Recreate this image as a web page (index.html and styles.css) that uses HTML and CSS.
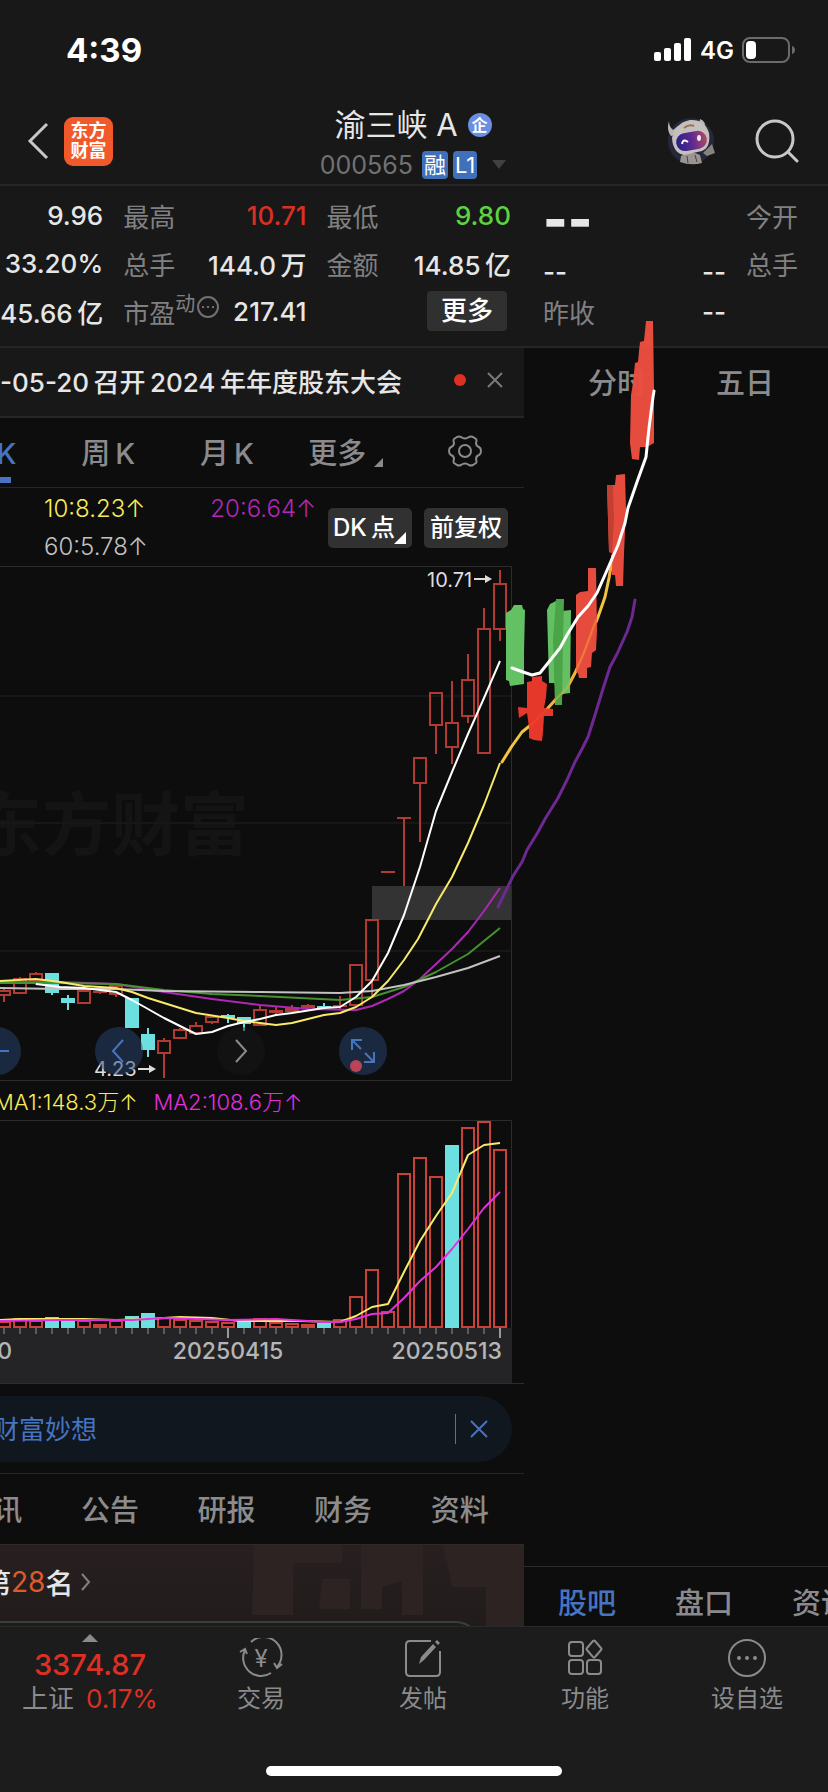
FILE: index.html
```
<!DOCTYPE html>
<html lang="zh-CN">

<head>
    <meta charset="UTF-8" />
    <meta name="viewport" content="width=device-width, initial-scale=1.0" />
    <title>渝三峡A 000565</title>
    <link rel="stylesheet" href="styles.css">
</head>

<body>
    <div class="status-bar">
        <span class="clock">4:39</span>
        <div class="status-icons">
            <svg width="38" height="24" viewBox="0 0 38 24" fill="#fff">
                <rect x="0" y="14" width="7" height="9" rx="2" />
                <rect x="10" y="10" width="7" height="13" rx="2" />
                <rect x="20" y="5" width="7" height="18" rx="2" />
                <rect x="30" y="0" width="7" height="23" rx="2" />
            </svg>
            <span class="network">4G</span>
            <svg width="54" height="26" viewBox="0 0 54 26">
                <rect x="1" y="1" width="46" height="24" rx="7" fill="none" stroke="#6b6b6b" stroke-width="2" />
                <rect x="4" y="4" width="10" height="18" rx="4" fill="#fff" />
                <path d="M50 9C54 10 54 16 50 17Z" fill="#6b6b6b" />
            </svg>
        </div>
    </div>

    <header class="header">
        <div class="header-left">
            <button class="icon-btn" aria-label="返回">
                <svg width="22" height="38" viewBox="0 0 22 38" fill="none" stroke="#c8c8c8" stroke-width="3">
                    <path d="M20 2L3 19L20 36" />
                </svg>
            </button>
            <div class="logo">东方<br>财富</div>
        </div>
        <div class="stock">
            <h1 class="stock-name">渝三峡 A <span class="badge-qi">企</span></h1>
            <div class="stock-code">
                <span>000565</span>
                <span class="tag">融</span>
                <span class="tag">L1</span>
                <svg class="code-arrow" width="14" height="9" viewBox="0 0 14 9"><path d="M0 0H14L7 9Z" fill="#404040" /></svg>
            </div>
        </div>
        <div class="header-right">
            <button class="icon-btn" aria-label="智能助手">
                <svg width="50" height="50" viewBox="0 0 50 50">
                    <defs>
                        <linearGradient id="visor" x1="0" x2="1">
                            <stop offset="0" stop-color="#28208a" />
                            <stop offset="0.5" stop-color="#5a2a90" />
                            <stop offset="1" stop-color="#b04868" />
                        </linearGradient>
                    </defs>
                    <circle cx="25" cy="25" r="23" fill="#24283a" />
                    <path d="M15 40Q25 34 34 39L36 47Q25 50 14 46Z" fill="#9c9490" />
                    <path d="M37 37L46 28L49 37L41 40Z" fill="#88827f" />
                    <path d="M3 5Q3 11 7 14L12 10L13 18L5 20Q0 14 3 5ZM34 3Q41 5 38 14L33 9Z" fill="#b9b5b3" />
                    <path d="M6 22Q9 7 24 4Q39 3 43 17Q45 31 36 35L18 39Q7 37 6 22Z" fill="#c5c0be" />
                    <rect x="10" y="16" width="31" height="18" rx="9" fill="url(#visor)" transform="rotate(-10 25 25)" />
                    <path d="M16 28Q17 22 22 26" fill="none" stroke="#fff" stroke-width="2" />
                    <ellipse cx="33" cy="22" rx="2" ry="3" fill="#f5e8ee" />
                    <path d="M18 12Q23 8 28 10" fill="none" stroke="#9a7450" stroke-width="2" />
                    <path d="M21 40L22 47M29 39L31 46" stroke="#47403e" stroke-width="1" />
                </svg>
            </button>
            <button class="icon-btn" aria-label="搜索">
                <svg width="44" height="46" viewBox="0 0 44 46" fill="none" stroke="#c8c8c8" stroke-width="3">
                    <circle cx="20" cy="21" r="18" />
                    <path d="M33 34L42 43" stroke-linecap="round" />
                </svg>
            </button>
        </div>
    </header>

    <section class="quotes">
        <div class="quote-main">
            <div class="cell cell-end"><b>9.96</b></div>
            <div class="cell"><span>最高</span><b class="red">10.71</b></div>
            <div class="cell"><span>最低</span><b class="green">9.80</b></div>
            <div class="cell cell-end"><b>33.20%</b></div>
            <div class="cell"><span>总手</span><b>144.0&thinsp;万</b></div>
            <div class="cell"><span>金额</span><b>14.85&thinsp;亿</b></div>
            <div class="cell cell-end"><b>45.66&thinsp;亿</b></div>
            <div class="cell">
                <span class="pe">市盈<sup>动</sup><svg width="22" height="22" viewBox="0 0 22 22" fill="none" stroke="#717173" stroke-width="2">
                        <circle cx="11" cy="11" r="10" />
                        <path d="M5 11h2M10 11h2M15 11h2" />
                    </svg></span>
                <b>217.41</b>
            </div>
            <div class="cell cell-end"><button class="more-btn">更多</button></div>
        </div>
        <div class="quote-next">
            <b class="big-dash">--</b><span></span><span>今开</span>
            <b class="low">--</b><b class="low dash-right">--</b><span>总手</span>
            <span>昨收</span><b class="dash-right">--</b><span></span>
        </div>
    </section>

    <main class="main">
        <div class="col-left">
            <div class="notice">
                <span class="notice-text">-05-20&thinsp;召开&thinsp;2024&thinsp;年年度股东大会</span>
                <i class="dot"></i>
                <button class="icon-btn" aria-label="关闭公告">
                    <svg width="16" height="16" viewBox="0 0 16 16" stroke="#7a7a7a" stroke-width="2"><path d="M1 1L15 15M15 1L1 15" /></svg>
                </button>
            </div>

            <nav class="period-tabs">
                <a href="#" class="active">日&thinsp;K</a>
                <a href="#">周&thinsp;K</a>
                <a href="#">月&thinsp;K</a>
                <a href="#">更多<svg class="corner" width="9" height="9" viewBox="0 0 9 9"><path d="M9 0V9H0Z" fill="#8b8b8d" /></svg></a>
                <button class="icon-btn" aria-label="设置">
                    <svg width="34" height="32" viewBox="0 0 34 32" fill="none" stroke="#8b8b8d" stroke-width="2">
                        <path d="M9 2Q11 1 13 2Q17 5 21 2Q23 1 25 2L28 4Q29 5 28 8Q28 11 31 12Q33 13 33 16Q33 19 31 20Q28 21 28 24Q29 27 28 28L25 30Q23 31 21 30Q17 27 13 30Q11 31 9 30L6 28Q5 27 6 24Q6 21 3 20Q1 19 1 16Q1 13 3 12Q6 11 6 8Q5 5 6 4Z" />
                        <circle cx="17" cy="16" r="6" />
                    </svg>
                </button>
            </nav>

            <div class="ma-row">
                <div class="ma-list">
                    <span class="yellow">10:8.23↑</span>
                    <span class="purple">20:6.64↑</span>
                    <span class="grey">60:5.78↑</span>
                </div>
                <button class="chart-btn">DK&thinsp;点<svg class="btn-corner" width="12" height="12" viewBox="0 0 12 12"><path d="M12 0V12H0Z" fill="#fff" /></svg></button>
                <button class="chart-btn">前复权</button>
            </div>

            <div class="k-chart">
                <svg class="chart" viewBox="0 566 524 516">
                    <text x="249" y="850" text-anchor="end" class="watermark">东方财富</text>
                    <path d="M0 696H511M0 823H511M0 951H511" class="grid-line" />
                    <path d="M0 566.5H511.5V1080.5H0" class="frame" />
                    <rect x="372" y="886" width="139" height="34" fill="#333" />
                    <g id="candles"></g>
                    <g class="ma-lines">
                        <path stroke="#ad28b5" d="M0 982L60 982L116 984L140 988L164 992L212 999L260 1005L308 1009L356 1010L372 1006L388 999L404 991L420 979L436 964L452 949L468 932L484 911L500 888" />
                        <path stroke="#45922e" d="M0 983L60 983L116 984L132 986L164 990L212 994L260 996L340 1000L372 997L404 987L436 972L468 954L500 928" />
                        <path stroke="#c2c2c2" d="M0 988L60 989L116 989L164 991L260 992L340 993L372 991L404 985L436 977L468 968L500 956" />
                        <path stroke="#f8eb6b" d="M0 981L36 979L60 982L84 986L116 988L132 992L148 998L164 1003L196 1013L228 1018L244 1021L260 1023L276 1025L292 1023L324 1015L340 1013L356 1007L372 997L388 981L404 960L418 939L436 904L452 877L468 843L484 805L500 763" />
                        <path stroke="#fff" d="M36 984L60 987L84 988L116 992L132 1000L148 1009L164 1018L180 1026L196 1034L212 1032L228 1026L244 1022L260 1019L276 1015L292 1013L324 1008L340 1007L356 997L372 981L388 953L404 915L420 867L436 811L452 772L468 734L484 698L500 661" />
                    </g>
                    <text x="427" y="587" class="price-label">10.71</text>
                    <path d="M474 579H486" class="pointer" /><path d="M485 575L492 579L485 583Z" fill="#ddd" />
                    <text x="94" y="1076" class="price-label">4.23</text>
                    <path d="M138 1069H150" class="pointer" /><path d="M149 1065L156 1069L149 1073Z" fill="#ddd" />
                </svg>
                <div class="chart-tools">
                    <button class="round-btn" aria-label="缩小"><svg width="24" height="24" viewBox="0 0 24 24"><path d="M0 12H24" /></svg></button>
                    <button class="round-btn" aria-label="左移"><svg width="24" height="24" viewBox="0 0 24 24"><path d="M16 1L6 12L16 23" /></svg></button>
                    <button class="round-btn dark" aria-label="右移"><svg width="24" height="24" viewBox="0 0 24 24"><path d="M7 1L17 12L7 23" /></svg></button>
                    <button class="round-btn" aria-label="全屏">
                        <svg width="24" height="24" viewBox="0 0 24 24"><path d="M1 11V1H11M1 1L10 10M23 13V23H13M23 23L14 14" /></svg>
                        <i class="tool-dot"></i>
                    </button>
                </div>
            </div>

            <div class="vol-row">
                <span class="yellow">MA1:148.3万↑</span>
                <span class="pink">MA2:108.6万↑</span>
            </div>
            <svg class="chart" viewBox="0 1120 524 264">
                <path d="M0 1120.5H511.5V1328" class="frame" />
                <rect x="0" y="1328" width="512" height="55" fill="#242426" />
                <path d="M0 1383.5H524" class="frame" />
                <g id="volumes"></g>
                <g class="ma-lines">
                    <path stroke="#f8eb6b" d="M0 1320L20 1319L84 1319L116 1320L148 1319L180 1317L212 1318L240 1321L300 1321L340 1322L356 1316L372 1307L388 1304L404 1272L420 1241L436 1216L452 1193L468 1155L484 1145L500 1143" />
                    <path stroke="#e32fdf" d="M0 1321L60 1320L132 1320L164 1318L228 1320L276 1319L324 1322L340 1322L356 1319L372 1314L388 1313L404 1298L420 1281L436 1267L452 1249L468 1229L484 1208L500 1192" />
                </g>
                <text x="12" y="1359" text-anchor="end" class="date">20250320</text>
                <text x="228" y="1359" text-anchor="middle" class="date">20250415</text>
                <text x="502" y="1359" text-anchor="end" class="date">20250513</text>
            </svg>

            <div class="ai-wrap">
                <div class="ai-bar">
                    <a href="#" class="ai-text">东方财富妙想</a>
                    <button class="ai-close" aria-label="关闭">
                        <svg width="18" height="18" viewBox="0 0 18 18" stroke="#4674c0" stroke-width="2"><path d="M1 1L17 17M17 1L1 17" /></svg>
                    </button>
                </div>
            </div>

            <nav class="info-tabs">
                <a href="#">资讯</a>
                <a href="#">公告</a>
                <a href="#">研报</a>
                <a href="#">财务</a>
                <a href="#">资料</a>
            </nav>

            <div class="rank">
                <svg class="rank-bg" width="272" height="83" viewBox="0 0 272 83" fill="#2d2323">
                    <path d="M2 0H90V18H41V70H0ZM109 0H171V70H150V36L130 42V64H109ZM191 0H272V83H234V42H200ZM70 34H98V64H67Z" />
                </svg>
                <a href="#" class="rank-text">第<em>28</em>名
                    <svg width="10" height="18" viewBox="0 0 10 18" fill="none" stroke="#858080" stroke-width="2"><path d="M1 1L8 9L1 17" /></svg>
                </a>
                <div class="rank-card"></div>
            </div>
        </div>

        <div class="col-right">
            <nav class="next-tabs">
                <a href="#">分时</a>
                <a href="#">五日</a>
            </nav>
            <nav class="next-info">
                <a href="#" class="active">股吧</a>
                <a href="#">盘口</a>
                <a href="#">资讯</a>
            </nav>
        </div>
    </main>

    <footer class="bottom-bar">
        <a href="#" class="index">
            <svg width="16" height="8" viewBox="0 0 16 8"><path d="M0 8H16L8 0Z" fill="#8b8b8d" /></svg>
            <strong>3374.87</strong>
            <span class="index-name">上证 <em>0.17%</em></span>
        </a>
        <a href="#">
            <svg width="44" height="40" viewBox="0 0 44 40" fill="none" stroke="#8b8b8d" stroke-width="2">
                <path d="M12 4A18 18 0 0 1 37 30M32 35A18 18 0 0 1 6 12M1 14L6 11L8 16M43 26L38 30L35 25" />
                <text x="22" y="29" text-anchor="middle" class="yen">¥</text>
            </svg>
            <span>交易</span>
        </a>
        <a href="#">
            <svg width="44" height="40" viewBox="0 0 44 40" fill="none" stroke="#8b8b8d" stroke-width="2">
                <path d="M30 3H9Q5 3 5 7V34Q5 38 9 38H35Q39 38 39 34V13" />
                <path d="M18 26L20 19L32 6L35 9L23 22ZM34 4L36 2L39 5L37 7Z" fill="#8b8b8d" stroke="none" />
            </svg>
            <span>发帖</span>
        </a>
        <a href="#">
            <svg width="44" height="40" viewBox="0 0 44 40" fill="none" stroke="#8b8b8d" stroke-width="2">
                <rect x="6" y="4" width="14" height="14" rx="3" />
                <path d="M30 3Q31 2 32 3L38 10Q39 11 38 12L32 19Q31 20 30 19L24 12Q23 11 24 10Z" />
                <rect x="6" y="22" width="14" height="14" rx="3" />
                <rect x="24" y="22" width="14" height="14" rx="3" />
            </svg>
            <span>功能</span>
        </a>
        <a href="#">
            <svg width="44" height="40" viewBox="0 0 44 40" fill="none" stroke="#8b8b8d" stroke-width="2">
                <circle cx="22" cy="20" r="18" />
                <g fill="#8b8b8d" stroke="none"><circle cx="14" cy="20" r="2" /><circle cx="22" cy="20" r="2" /><circle cx="30" cy="20" r="2" /></g>
            </svg>
            <span>设自选</span>
        </a>
    </footer>
    <div class="home-indicator"></div>

    <!-- hand drawn forecast -->
    <svg class="doodle" viewBox="0 0 828 1792">
        <path class="stroke" stroke="#f2c443" d="M502 762L512 746L522 732L532 724L548 708L557 698L567 688L575 673L583 655L598 617L605 597L609 578L613 555" />
        <g fill="#66c766" opacity="0.97">
            <path d="M506 613L511 610L514 605L522 605L523 609L525 610L524 653L524 684L510 686L509 681L506 680Z" />
            <path d="M547 610L550 604L556 601L557 599L564 599L562 611L571 610L570 693L563 694L554 683L549 683Z" />
            <path fill="#4fa94b" d="M556 599L564 599L563 640L562 705L555 705L553 640Z" />
        </g>
        <g fill="#ee4f3f" opacity="0.97">
            <path fill="#ee3a2b" d="M532 677L542 676L542 681L547 684L546 697L544 708L553 709L553 716L544 716L543 732L542 741L534 740L529 738L529 727L527 713L519 718L518 707L527 708L527 682L532 681Z" />
            <path d="M576 595L580 592L588 591L588 568L596 568L597 630L596 650L592 653L591 667L587 668L587 678L579 678L578 673L576 672Z" />
            <path d="M607 485L615 485L616 475L625 474L626 510L624 553L623 586L616 586L615 575L612 575L612 553L609 552Z" />
            <path fill="#c74234" d="M607 485L613 485L614 520L612 553L609 552Z" />
            <path d="M646 321L653 321L654 390L654 443L647 447L640 447L639 460L632 459L630 443L631 395L633 383L635 363L638 362L639 351L640 342L644 341Z" />
        </g>
        <path stroke="#f2a030" stroke-width="2" fill="none" opacity="0.5" d="M548 708L557 698L567 688L575 673L583 655L596 620M609 578L613 555" />
        <path class="stroke" stroke="#6d2892" d="M498 907L513 876L522 862L527 850L538 832L545 819L558 798L567 780L575 762L582 749L588 737L595 715L602 692L610 667L617 654L627 632L632 617L635 600" />
        <path class="stroke" stroke="#fff" d="M512 668L523 672L532 675L540 673L548 663L560 648L567 635L578 617L588 606L597 593L608 568L618 545L625 523L628 508L637 482L646 457L649 428L653 397L654 391" />
    </svg>

    <script>
        // x, high, top, bottom, low, type: r = hollow red, f = filled red, c = cyan
        const candles = [
            [4, 989, 991, 995, 1002, 'r'], [20, 977, 979, 993, 994, 'r'], [36, 972, 974, 980, 985, 'r'],
            [52, 973, 973, 993, 995, 'c'], [68, 995, 998, 1003, 1010, 'c'], [84, 991, 991, 1003, 1003, 'r'],
            [100, 990, 991, 993, 994, 'f'], [116, 984, 986, 994, 997, 'r'], [132, 998, 998, 1028, 1028, 'c'],
            [148, 1028, 1034, 1050, 1057, 'c'], [164, 1038, 1041, 1053, 1078, 'r'], [180, 1028, 1030, 1038, 1038, 'r'],
            [196, 1022, 1026, 1033, 1033, 'r'], [212, 1015, 1017, 1022, 1024, 'r'], [228, 1014, 1015, 1018, 1023, 'c'],
            [244, 1017, 1017, 1024, 1031, 'c'], [260, 1005, 1010, 1025, 1026, 'r'], [276, 1006, 1010, 1013, 1015, 'f'],
            [292, 1005, 1007, 1012, 1013, 'f'], [308, 1004, 1005, 1008, 1009, 'f'], [324, 1003, 1006, 1008, 1008, 'c'],
            [340, 996, 1005, 1007, 1009, 'f'], [356, 965, 965, 1005, 1006, 'r'], [372, 920, 920, 980, 997, 'r'],
            [388, 872, 871, 873, 872, 'f'], [404, 818, 817, 819, 886, 'f'], [420, 758, 758, 783, 842, 'r'],
            [436, 693, 693, 725, 754, 'r'], [452, 681, 723, 747, 764, 'r'], [468, 654, 680, 716, 723, 'r'],
            [484, 608, 629, 753, 753, 'r'], [500, 570, 584, 629, 641, 'r']
        ];
        const volumes = [1321, 1318, 1320, 1317, 1320, 1320, 1324, 1320, 1316, 1313, 1317, 1319, 1320, 1321, 1322, 1321,
            1318, 1322, 1323, 1324, 1323, 1319, 1296, 1269, 1311, 1173, 1157, 1176, 1145, 1127, 1121, 1149];
        const red = '#b23a33';
        const cyan = '#6ce0e0';

        let html = '';
        candles.forEach(([x, high, top, bottom, low, type]) => {
            const color = type === 'c' ? cyan : red;
            html += `<path d="M${x} ${high}V${top}M${x} ${bottom}V${low}" stroke="${color}" stroke-width="2"/>`;
            if (type === 'r') {
                html += `<rect x="${x - 6}" y="${top}" width="12" height="${bottom - top}" fill="none" stroke="${color}" stroke-width="2"/>`;
            } else {
                html += `<rect x="${x - 7}" y="${top}" width="14" height="${bottom - top}" fill="${color}"/>`;
            }
        });
        document.getElementById('candles').innerHTML = html;

        html = '';
        const cyanBars = [3, 4, 8, 9, 15, 20, 28];
        volumes.forEach((top, i) => {
            const x = 4 + i * 16;
            if (cyanBars.includes(i)) {
                html += `<rect x="${x - 7}" y="${top}" width="14" height="${1328 - top}" fill="${cyan}"/>`;
            } else {
                html += `<rect x="${x - 6}" y="${top + 1}" width="12" height="${1326 - top}" fill="none" stroke="#c8423a" stroke-width="2"/>`;
            }
            const major = x === 228 || x === 500;
            html += `<path d="M${x} 1328V${major ? 1338 : 1334}" stroke="${major ? '#999' : '#5c5c5e'}" stroke-width="2"/>`;
        });
        document.getElementById('volumes').innerHTML = html;
    </script>
</body>

</html>
```
FILE: styles.css
```
* {
    box-sizing: border-box;
}

body {
    margin: 0;
    min-height: 100vh;
    display: flex;
    flex-direction: column;
    position: relative;
    overflow-x: hidden;
    background: #1c1c1c;
    color: #e6e6e6;
    font-family: Inter, "Noto Sans CJK SC", sans-serif;
    font-size: 26px;
}

a {
    color: inherit;
    text-decoration: none;
}

button {
    font: inherit;
    color: inherit;
    border: none;
    padding: 0;
    background: none;
}

svg {
    display: block;
    flex-shrink: 0;
}

em {
    font-style: normal;
}

.icon-btn {
    display: flex;
    align-items: center;
    justify-content: center;
}

.red {
    color: #d93026;
}

.green {
    color: #5fd042;
}

.yellow {
    color: #f8eb5b;
}

.purple {
    color: #b526b9;
}

.pink {
    color: #e32fdf;
}

.grey {
    color: #c2c2c2;
}

/* status bar */
.status-bar {
    height: 98px;
    padding: 2px 32px 0 66px;
    display: flex;
    justify-content: space-between;
    align-items: center;
    background: #181818;
    color: #fff;
}

.clock {
    font-size: 33px;
    font-weight: 700;
}

.status-icons {
    display: flex;
    align-items: center;
    gap: 8px;
}

.network {
    font-size: 24px;
    font-weight: 600;
}

/* header */
.header {
    height: 88px;
    padding: 0 29px 0 27px;
    display: grid;
    grid-template-columns: 1fr auto 1fr;
    align-items: center;
    background: #181818;
    border-bottom: 2px solid #262627;
}

.header-left {
    display: flex;
    align-items: center;
    gap: 15px;
}

.logo {
    width: 49px;
    height: 49px;
    border-radius: 9px;
    background: #f1592a;
    color: #fff;
    font-size: 18px;
    line-height: 20px;
    font-weight: 700;
    text-align: center;
    padding-top: 4px;
}

.stock {
    padding-top: 3px;
}

.stock-name {
    margin: 0;
    font-size: 31px;
    line-height: 44px;
    font-weight: 400;
    display: flex;
    align-items: center;
    justify-content: center;
    gap: 10px;
}

.badge-qi {
    width: 24px;
    height: 24px;
    border-radius: 12px;
    background: #6c8ee0;
    color: #fff;
    font-size: 16px;
    line-height: 24px;
    font-weight: 700;
    text-align: center;
}

.stock-code {
    display: flex;
    align-items: center;
    justify-content: center;
    gap: 5px;
    height: 36px;
    font-size: 25px;
    color: #717173;
}

.stock-code span:first-child {
    margin-right: 4px;
}

.tag {
    height: 28px;
    padding: 0 2px;
    border-radius: 4px;
    background: #3f70b9;
    color: #fff;
    font-size: 22px;
    line-height: 28px;
}

.code-arrow {
    margin-left: 10px;
}

.header-right {
    display: flex;
    justify-content: flex-end;
    align-items: center;
    gap: 39px;
}

/* quotes */
.quotes {
    display: grid;
    grid-template-columns: 524fr 304fr;
    background: #181818;
    border-bottom: 2px solid #262627;
}

.quotes b {
    font-weight: 500;
}

.quote-main {
    display: grid;
    grid-template-columns: 103fr 183fr 184fr;
    grid-auto-rows: 48px;
    column-gap: 20px;
    padding: 5px 13px 11px 0;
}

.cell {
    display: flex;
    justify-content: space-between;
    align-items: center;
    white-space: nowrap;
}

.cell-end {
    justify-content: flex-end;
}

.cell span,
.quote-next span {
    color: #808082;
}

.pe {
    display: flex;
    align-items: center;
}

.pe sup {
    font-size: 20px;
    line-height: 20px;
    margin-bottom: 14px;
}

.pe svg {
    margin: 0 0 8px 2px;
}

.more-btn {
    height: 40px;
    padding: 0 14px;
    margin-right: 4px;
    border-radius: 4px;
    background: #303031;
    color: #fff;
    line-height: 38px;
    font-weight: 500;
}

.quote-next {
    display: grid;
    grid-template-columns: 1fr 1fr 52px;
    grid-auto-rows: 48px;
    column-gap: 20px;
    align-items: center;
    padding: 5px 30px 11px 19px;
}

.quotes .big-dash {
    padding-top: 10px;
    font-size: 52px;
    line-height: 48px;
    font-weight: 900;
}

.low {
    padding-top: 16px;
}

.dash-right {
    text-align: right;
}

/* two columns under the quotes */
.main {
    flex: 1;
    display: grid;
    grid-template-columns: 524fr 304fr;
    background: #0d0d0d;
}

.col-left,
.col-right {
    min-width: 0;
    overflow: hidden;
}

.col-left {
    display: flex;
    flex-direction: column;
}

.notice {
    height: 70px;
    padding: 0 21px 4px 0;
    display: flex;
    align-items: center;
    background: #181818;
    border-bottom: 2px solid #262627;
}

.notice-text {
    flex: 1;
    font-weight: 500;
    white-space: nowrap;
}

.dot {
    width: 12px;
    height: 12px;
    margin-right: 21px;
    border-radius: 6px;
    background: #dd3022;
}

.period-tabs {
    height: 70px;
    margin-left: -70px;
    padding-bottom: 3px;
    display: grid;
    grid-template-columns: repeat(5, 1fr);
    border-bottom: 1px solid #262627;
    color: #8b8b8d;
    font-size: 29px;
    font-weight: 500;
}

.period-tabs a {
    display: flex;
    align-items: center;
    justify-content: center;
}

.period-tabs .active {
    color: #4674c0;
    background: linear-gradient(#4674c0, #4674c0) 50% 59px / 44px 6px no-repeat;
}

.corner {
    margin: 22px 0 0 8px;
}

.ma-row {
    height: 78px;
    padding: 2px 16px 0 0;
    display: flex;
    align-items: center;
    gap: 12px;
}

.ma-list {
    flex: 1;
    display: grid;
    grid-template-columns: 1fr 1fr;
    line-height: 38px;
    padding-left: 44px;
    font-size: 24px;
    font-weight: 300;
    white-space: nowrap;
}

.ma-list .purple {
    text-align: right;
}

.chart-btn {
    width: 84px;
    height: 40px;
    border-radius: 5px;
    background: #313132;
    color: #fff;
    font-size: 24px;
    line-height: 40px;
    font-weight: 500;
    position: relative;
    white-space: nowrap;
}

.chart-btn:has(svg) {
    padding-right: 12px;
}

.btn-corner {
    position: absolute;
    right: 6px;
    bottom: 4px;
}

/* charts */
.chart {
    width: 100%;
    height: auto;
}

.k-chart {
    position: relative;
}

.frame {
    fill: none;
    stroke: #2c2c2d;
}

.grid-line {
    stroke: #171718;
    stroke-width: 2;
}

.watermark {
    font-size: 69px;
    font-weight: 700;
    fill: #141414;
}

.ma-lines {
    fill: none;
    stroke-width: 2;
    stroke-linejoin: round;
}

.price-label {
    font-size: 20px;
    fill: #ddd;
}

.pointer {
    stroke: #ddd;
    stroke-width: 2;
}

.date {
    font-size: 23px;
    font-weight: 500;
    fill: #b5b5b6;
}

.chart-tools {
    position: absolute;
    left: -27px;
    bottom: 7px;
    display: flex;
    gap: 74px;
}

.round-btn {
    width: 48px;
    height: 48px;
    border-radius: 24px;
    display: flex;
    align-items: center;
    justify-content: center;
    background: rgba(42, 70, 115, 0.5);
    position: relative;
}

.round-btn svg {
    fill: none;
    stroke: #4674c0;
    stroke-width: 2;
}

.round-btn.dark {
    background: rgba(24, 24, 24, 0.5);
}

.round-btn.dark svg {
    stroke: #8b8b8d;
}

.tool-dot {
    position: absolute;
    left: 11px;
    bottom: 3px;
    width: 12px;
    height: 12px;
    border-radius: 6px;
    background: #b84557;
}

.vol-row {
    height: 38px;
    margin-left: -6px;
    padding-bottom: 3px;
    display: flex;
    align-items: center;
    gap: 16px;
    font-size: 22px;
    font-weight: 300;
    white-space: nowrap;
}

.ai-wrap {
    padding: 12px 12px 11px 0;
    border-bottom: 1px solid #262627;
}

.ai-bar {
    height: 66px;
    padding: 0 24px 0 0;
    display: flex;
    align-items: center;
    justify-content: space-between;
    border-radius: 0 33px 33px 0;
    background: #10171f;
    color: #4674c0;
}

.ai-text {
    margin-left: -59px;
    padding-bottom: 4px;
}

.ai-close {
    height: 30px;
    padding-left: 14px;
    border-left: 1px solid #4674c0;
}

.info-tabs {
    height: 70px;
    margin: 0 6px 0 -65px;
    padding-bottom: 3px;
    display: grid;
    grid-template-columns: repeat(5, 1fr);
    align-items: center;
    text-align: center;
    color: #8b8b8d;
    font-size: 29px;
    font-weight: 500;
}

.rank {
    flex: 1;
    position: relative;
    overflow: hidden;
    background: linear-gradient(#281f20, #211c1b);
    border-top: 1px solid #302929;
}

.rank-bg {
    position: absolute;
    top: 0;
    right: 0;
}

.rank-text {
    position: relative;
    display: flex;
    align-items: center;
    height: 76px;
    margin-left: -17px;
    padding-bottom: 2px;
    font-size: 28px;
    font-weight: 500;
}

.rank-text em {
    color: #df5a2b;
    font-weight: 400;
}

.rank-text svg {
    margin-left: 8px;
}

/* only the top edge of the card shows above the bottom bar */
.rank-card {
    position: relative;
    height: 40px;
    margin: 0 44px -36px 0;
    border: 2px solid #35413b;
    border-left: none;
    border-radius: 0 24px 0 0;
}

.col-right {
    display: flex;
    flex-direction: column;
    justify-content: space-between;
    color: #8b8b8d;
    font-size: 29px;
    font-weight: 500;
}

.next-tabs {
    height: 66px;
    display: flex;
    align-items: center;
    gap: 70px;
    padding-left: 64px;
}

.next-info {
    height: 60px;
    padding: 14px 0 0 34px;
    display: flex;
    gap: 59px;
    border-top: 1px solid #2c2c2d;
    line-height: 46px;
    white-space: nowrap;
}

.next-info .active {
    color: #4674c0;
}

/* bottom bar */
.bottom-bar {
    height: 140px;
    display: grid;
    grid-template-columns: 180fr 162fr 162fr 162fr 162fr;
    border-top: 1px solid #2a2a2b;
    color: #8b8b8d;
    font-size: 24px;
}

.bottom-bar a {
    padding-top: 11px;
    display: flex;
    flex-direction: column;
    align-items: center;
    gap: 4px;
    line-height: 34px;
}

.bottom-bar .index {
    padding-top: 7px;
    gap: 0;
    font-size: 26px;
    white-space: nowrap;
}

.index strong {
    margin-top: 6px;
    font-size: 29px;
    font-weight: 500;
}

.index-name {
    display: flex;
    gap: 12px;
}

.index strong,
.index em {
    color: #dd3022;
}

.yen {
    font-size: 24px;
    fill: #8b8b8d;
    stroke: none;
}

.home-indicator {
    width: 296px;
    height: 10px;
    margin: 0 auto 16px;
    border-radius: 5px;
    background: #fff;
}

.doodle {
    position: absolute;
    top: 0;
    left: 0;
    width: 100%;
    pointer-events: none;
}

.stroke {
    fill: none;
    stroke-width: 3;
    stroke-linecap: round;
    stroke-linejoin: round;
}
```
